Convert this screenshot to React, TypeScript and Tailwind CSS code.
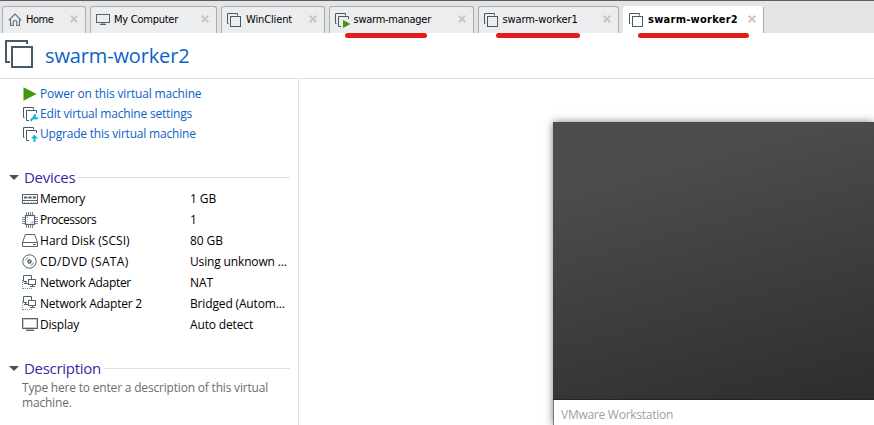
import type { ReactNode } from 'react';

const INK = '#485a66';

function VmIcon({ badge, className = '' }: { badge?: 'play' | 'wrench' | 'up'; className?: string }) {
  return (
    <svg width="16" height="15" viewBox="0 0 16 15" className={`shrink-0 ${className}`} fill="none">
      <path d="M1.5 10.5H.5V.5h10v2" stroke={INK} />
      {badge ? (
        <path d="M6 13.5H3.5v-10h10V6" stroke={INK} />
      ) : (
        <rect x="3.5" y="3.5" width="10" height="10" stroke={INK} />
      )}
      {badge === 'play' && <path d="M8 7l7.5 4L8 15z" fill="#45960f" />}
      {badge === 'wrench' && (
        <>
          <path d="M7.500 13.800l4-4" stroke="#18b4d0" strokeWidth="2.200" />
          <path d="M13.300 7.200a2.700 2.700 0 1 0 2.200 2.600l-1.700 1-1.300-1.300z" fill="#18b4d0" />
        </>
      )}
      {badge === 'up' && (
        <path d="M11.500 7.800l3.500 3.700h-2.500v3.500h-2v-3.500H8z" fill="#18b4d0" />
      )}
    </svg>
  );
}

function HomeIcon() {
  return (
    <svg width="14" height="14" viewBox="0 0 14 14" className="shrink-0" fill="none" stroke="#5c6b75" strokeWidth="1.100">
      <path d="M.7 7.400L7 1.100l6.300 6.300M2.500 6.500v6h2.700V8.800Q5.200 7.500 7 7.500t1.800 1.300v3.700h2.700v-6" />
    </svg>
  );
}

function MonitorIcon({ wide = false }: { wide?: boolean }) {
  return wide ? (
    <svg width="16" height="13" viewBox="0 0 16 13" fill="none" stroke="#52636e">
      <rect x=".5" y=".5" width="15" height="10" />
      <rect x="1.500" y="1.500" width="13" height="8" stroke="#c3cace" />
      <path d="M4 12.300h8" strokeWidth="1.400" />
    </svg>
  ) : (
    <svg width="14" height="12" viewBox="0 0 14 12" className="shrink-0" fill="none" stroke="#52636e">
      <rect x=".5" y=".5" width="13" height="8" />
      <path d="M6 9v2M8 9v2M4 10.500h6" />
    </svg>
  );
}

function MemoryIcon() {
  return (
    <svg width="16" height="10" viewBox="0 0 16 10" fill="none" stroke="#52636e">
      <rect x=".5" y=".5" width="15" height="9" />
      <path d="M2 3.500h3.300M6.300 3.500h3.400M10.700 3.500H14" strokeWidth="2" />
      <path d="M1 6.500h14" />
      <path d="M2 8.500h5M9 8.500h5" stroke="#98a3aa" strokeDasharray="1 1" />
    </svg>
  );
}

function CpuIcon() {
  return (
    <svg width="16" height="16" viewBox="0 0 16 16" fill="none" stroke="#52636e">
      <rect x="3.500" y="3.500" width="9" height="9" strokeWidth="1.200" />
      <path
        d="M4.500 0v3M6.500 0v3M8.500 0v3M10.500 0v3M4.500 13v3M6.500 13v3M8.500 13v3M10.500 13v3M0 5.500h3M0 7.500h3M0 9.500h3M0 11.500h3M13 5.500h3M13 7.500h3M13 9.500h3M13 11.500h3"
        stroke="#7a8790"
      />
      <path d="M5 5.500h1M9.500 10.200h1.500" />
    </svg>
  );
}

function DiskIcon() {
  return (
    <svg width="16" height="13" viewBox="0 0 16 13" fill="none" stroke="#52636e">
      <path d="M.5 8.500L3.300.5h9.400l2.800 8v4H.5zM.5 8.500h15M11 10.500h3" />
    </svg>
  );
}

function DiscIcon() {
  return (
    <svg width="15" height="15" viewBox="0 0 15 15" fill="none" stroke="#52636e">
      <circle cx="7.500" cy="7.500" r="6.700" />
      <circle cx="7.500" cy="7.500" r="1.500" strokeWidth="1.500" />
      <path d="M3.500 6.500A4.200 4.200 0 0 1 6.500 3.500M11.500 8.500A4.200 4.200 0 0 1 8.500 11.500" stroke="#85919a" />
    </svg>
  );
}

function NetworkIcon() {
  return (
    <svg width="15" height="15" viewBox="0 0 15 15" fill="none" stroke="#52636e">
      <path d="M5 6.500H1.500v-6h8V4M3.500 6.500v2M2 8.500h4" />
      <rect x="6.500" y="4.500" width="7" height="5" />
      <path d="M10.500 10v2M8 11.500h5" />
      <path d="M.5 5v9M1 13.500h9" strokeDasharray="1 1" stroke="#85919a" />
    </svg>
  );
}

const tabs: { text: string; icon: ReactNode; box: string; label: string }[] = [
  { text: 'Home', icon: <HomeIcon />, box: 'w-[84px] pl-[5px]', label: 'ml-[4px] tracking-[-0.5px]' },
  { text: 'My Computer', icon: <MonitorIcon />, box: 'w-[127px] pl-[5px]', label: 'ml-[4px] tracking-[-0.25px]' },
  { text: 'WinClient', icon: <VmIcon />, box: 'w-[104px] pl-[5px]', label: 'ml-[3px] tracking-[-0.13px]' },
  { text: 'swarm-manager', icon: <VmIcon badge="play" />, box: 'w-[145px] pl-[5px]', label: 'ml-[2.500px] tracking-[-0.26px]' },
  { text: 'swarm-worker1', icon: <VmIcon />, box: 'w-[141px] pl-[5px]', label: 'ml-[2.500px] tracking-[-0.1px]' },
  { text: 'swarm-worker2', icon: <VmIcon />, box: 'w-[141px] pl-[5px]', label: 'ml-[3px] font-bold tracking-[0.26px]' },
];

const actions: { text: string; icon: ReactNode; track: string }[] = [
  {
    text: 'Power on this virtual machine',
    icon: (
      <svg width="14" height="14" viewBox="0 0 14 14" className="ml-px">
        <path d="M.5.300L13.500 7 .5 13.700z" fill="#45960f" />
      </svg>
    ),
    track: 'tracking-[-0.16px]',
  },
  { text: 'Edit virtual machine settings', icon: <VmIcon badge="wrench" className="ml-px" />, track: 'tracking-[-0.19px]' },
  { text: 'Upgrade this virtual machine', icon: <VmIcon badge="up" className="ml-px" />, track: 'tracking-[-0.2px]' },
];

const devices: { name: string; value: string; icon: ReactNode; nt: string; vt: string }[] = [
  { name: 'Memory', value: '1 GB', icon: <MemoryIcon />, nt: 'tracking-[-0.3px]', vt: 'tracking-[-0.1px]' },
  { name: 'Processors', value: '1', icon: <CpuIcon />, nt: 'tracking-[-0.5px]', vt: '' },
  { name: 'Hard Disk (SCSI)', value: '80 GB', icon: <DiskIcon />, nt: 'tracking-[0.05px]', vt: 'tracking-[-0.1px]' },
  { name: 'CD/DVD (SATA)', value: 'Using unknown ...', icon: <DiscIcon />, nt: 'tracking-[0.38px]', vt: 'tracking-[-0.15px]' },
  { name: 'Network Adapter', value: 'NAT', icon: <NetworkIcon />, nt: 'tracking-[-0.32px]', vt: '' },
  { name: 'Network Adapter 2', value: 'Bridged (Autom...', icon: <NetworkIcon />, nt: 'tracking-[-0.22px]', vt: 'tracking-[-0.15px]' },
  { name: 'Display', value: 'Auto detect', icon: <MonitorIcon wide />, nt: 'tracking-[-0.2px]', vt: 'tracking-[-0.15px]' },
];

function SectionTitle({ children, track }: { children: ReactNode; track: string }) {
  return (
    <div className="flex h-5 items-center pl-[9px] pr-2">
      <svg width="10" height="5" viewBox="0 0 10 5" className="shrink-0">
        <path d="M0 0h10L5 5z" fill="#405562" />
      </svg>
      <h2 className={`ml-[5px] text-[15px] leading-5 text-[#3d27a3] ${track}`}>{children}</h2>
      <div className="ml-[3px] h-px flex-1 bg-[#e0e0e0]" />
    </div>
  );
}

export default function App() {
  return (
    <div className="relative flex h-[425px] w-[874px] flex-col overflow-hidden bg-white font-['Open_Sans','Noto_Sans_CJK_KR',sans-serif] text-[12px] whitespace-nowrap text-black">
      <div className="flex h-[33px] shrink-0 items-end gap-1 border-t border-[#5d5c62] bg-[#e3e4e6] pl-[2px] font-['DejaVu_Sans_Condensed','DejaVu_Sans',sans-serif] text-[11px] [font-stretch:condensed]">
        {tabs.map((tab, i) => (
          <div
            key={tab.text}
            className={`flex h-[27px] shrink-0 items-center rounded-t-[3px] border border-b-0 pr-[7px] ${tab.box} ${
              i === 5 ? 'border-l-white border-t-white border-r-[#adadad] bg-white' : 'border-[#adadad] bg-[#ebedee]'
            }`}
          >
            {tab.icon}
            <span className={`leading-4 ${tab.label}`}>{tab.text}</span>
            <svg width="8" height="8" viewBox="0 0 8 8" className="mb-[2px] ml-auto shrink-0">
              <path d="M.8.800l6.400 6.400M7.200.800L.8 7.200" stroke="#c7c7c7" strokeWidth="2" />
            </svg>
          </div>
        ))}
      </div>
      <div className="absolute top-[33px] left-[345px] h-[5px] w-[82px] rounded-full bg-[#e51b1b]" />
      <div className="absolute top-[33px] left-[496px] h-[5px] w-[84px] rounded-full bg-[#e51b1b]" />
      <div className="absolute top-[33px] left-[638px] h-[5px] w-[111px] rounded-full bg-[#e51b1b]" />

      <header className="flex h-[46px] shrink-0 items-center border-b border-[#e0e0e0] pl-[5px]">
        <svg width="28" height="28" viewBox="0 0 28 28" fill="none" stroke={INK} strokeWidth="2" className="mb-[3px]">
          <path d="M5 22H1V1h21v3" />
          <rect x="7" y="7" width="20" height="20" />
        </svg>
        <h1 className="ml-3 text-[20px] leading-7 tracking-[-0.14px] text-[#0a62c9]">swarm-worker2</h1>
      </header>

      <div className="flex min-h-0 flex-1">
        <aside className="flex w-[299px] shrink-0 flex-col border-r border-[#e0e0e0] pt-[5px]">
          {actions.map((a) => (
            <div key={a.text} className="flex h-5 items-center pl-[22px] text-[#0a62c9]">
              <span className="flex w-[18px]">{a.icon}</span>
              <span className={a.track}>{a.text}</span>
            </div>
          ))}
          <div className="mt-[23px] mb-px">
            <SectionTitle track="tracking-[-0.3px]">Devices</SectionTitle>
          </div>
          {devices.map((d) => (
            <div key={d.name} className="flex h-[21px] items-center pl-[22px]">
              <span className="flex w-[18px]">{d.icon}</span>
              <span className={`w-[150px] ${d.nt}`}>{d.name}</span>
              <span className={d.vt}>{d.value}</span>
            </div>
          ))}
          <div className="mt-[23px] mb-px">
            <SectionTitle track="tracking-[-0.3px]">Description</SectionTitle>
          </div>
          <p className="ml-[22px] w-[262px] pt-px leading-[15px] tracking-[-0.19px] whitespace-normal text-[#6d6d6d]">
            Type here to enter a description of this virtual machine.
          </p>
        </aside>
        <main className="flex min-w-0 flex-1 flex-col pt-[43px] pl-[254px]">
          <div className="flex flex-1 flex-col shadow-[0_0_8px_rgba(0,0,0,0.5)]">
            <div className="h-[278px] shrink-0 border-b border-[#242424] bg-linear-[165deg,#4d4d4d_18%,#2d2d2d_100%]" />
            <div className="flex-1 border-l border-[#777] bg-white pt-[6px] pl-[7px] leading-[18px] tracking-[-0.26px] text-[#a0a0a0]">
              VMware Workstation
            </div>
          </div>
        </main>
      </div>
    </div>
  );
}
